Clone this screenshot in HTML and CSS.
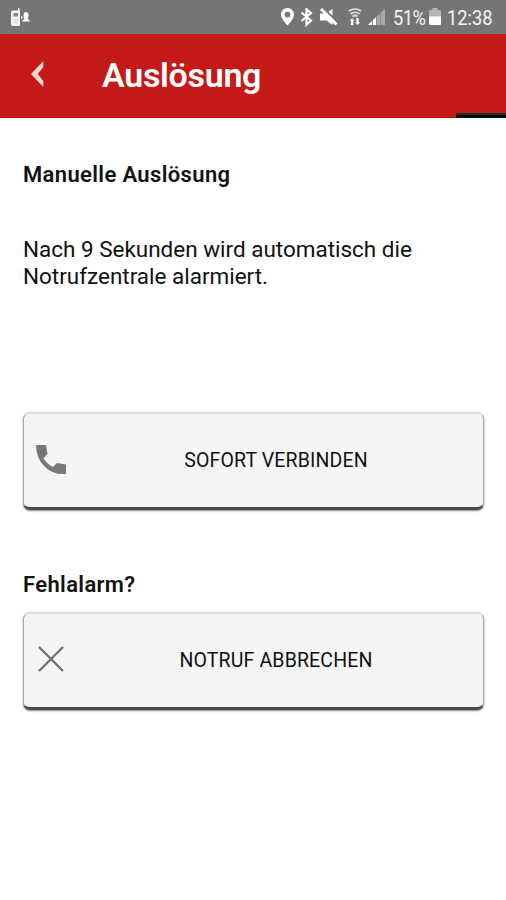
FILE: index.html
```html
<!DOCTYPE html>
<html lang="de">
<head>
<meta charset="utf-8">
<title>Auslösung</title>
<link rel="stylesheet" href="styles.css">
</head>
<body>
<div class="status">
  <svg class="device" width="22" height="20" viewBox="0 0 22 20">
    <path fill="#f1f1f1" d="M8 0h1.500v4H8zM3 2.500h7v14.500q0 1-1 1H3q-2 0-2-2V4.500q0-2 2-2z"/>
    <path fill="#888" d="M3.500 5h4.500v3.500H3.500z"/>
    <path stroke="#ccc" d="M3.500 12h4.500M3.500 14.500h4.500"/>
    <path fill="#fff" d="M11 8.500h1.500v2H11zM13.500 7.500q0-3.500 2.500-3.500t2.500 3.500q0 2-1 3.500 2.500.5 2.500 2.500h-8q.500-2 2.500-2.500-1-1.500-1-3.500z"/>
  </svg>
  <svg class="indicators" width="106" height="20" viewBox="0 0 106 20">
    <path fill="#fff" fill-rule="evenodd" d="M7.500 0C3.700 0 1 2.800 1 6.800c0 4.500 6.500 10.700 6.500 10.700S14 11.300 14 6.800C14 2.800 11.300 0 7.500 0zm0 3.700a2.900 2.900 0 1 1 0 5.800 2.900 2.900 0 0 1 0-5.800z"/>
    <path fill="none" stroke="#fff" stroke-width="2.200" d="M21.500 4.500l9.500 8-4.500 4.200V1.300L31 5l-9.500 8"/>
    <path fill="#fff" d="M40 5.500h5.500l7-4.500v16l-6-4.500H40z"/>
    <path stroke="#757575" stroke-width="2" d="M43.500 0l15 15"/>
    <path stroke="#fff" stroke-width="3" d="M41 1l15.500 15.500"/>
    <path fill="none" stroke="#e0e0e0" stroke-width="1.700" d="M69 3q6-4 12 0M70.500 6q4.500-3.500 9 0M72.500 8.500q2.500-2 5 0"/>
    <path fill="#fff" d="M69.500 13l2.700-3 2.300 3h-1.200v4h-2.300v-4zM75 14h1.300v-4h2.300v4h1.400l-2.400 3z"/>
    <path fill="#a9a9a9" d="M105 .5V17H88z"/>
    <path fill="#fff" d="M96 9.300V17h-8z"/>
    <path stroke="#858585" d="M92.500 12v5M96.500 8v9M100.500 4v13"/>
  </svg>
  <span class="percent">51%</span>
  <svg class="battery" width="12" height="17" viewBox="0 0 12 17">
    <path fill="#b5b5b5" d="M3.500 0h5v2H11q1 0 1 1v6H0V3q0-1 1-1h2.500z"/>
    <path fill="#fff" d="M0 8.500h12V16q0 1-1 1H1q-1 0-1-1z"/>
  </svg>
  <span class="clock">12:38</span>
</div>
<header class="appbar">
  <svg class="back" width="16" height="30" viewBox="0 0 16 30">
    <path fill="#f7d4d2" d="M13.300 1v6L7.800 14l5.500 7v6L1 14z"/>
  </svg>
  <h1>Auslösung</h1>
  <div class="progress"></div>
</header>
<main>
  <h2 class="manual">Manuelle Auslösung</h2>
  <p>Nach 9 Sekunden wird automatisch die<br>Notrufzentrale alarmiert.</p>
  <button class="connect">
    <svg width="30" height="30" viewBox="0 0 30 30"><path fill="#777" d="M0 0h10l1.500 9-4 4.200Q11 19 17 22l4-4 9 1.500V29Q17 30 8.500 21.500T0 0z"/></svg>
    <span>SOFORT VERBINDEN</span>
  </button>
  <h2 class="false-alarm">Fehlalarm?</h2>
  <button class="cancel">
    <svg width="30" height="30" viewBox="0 0 30 30"><path fill="none" stroke="#6c6c6c" stroke-width="2.200" d="M3 2l24 24M27 2L3 26"/></svg>
    <span>NOTRUF ABBRECHEN</span>
  </button>
</main>
</body>
</html>
```
FILE: styles.css
```css
* { box-sizing: border-box; }
body {
  margin: 0;
  width: 506px;
  height: 900px;
  overflow: hidden;
  background: #fff;
  color: #111;
  font-family: Roboto, sans-serif;
}
h1, h2, p { margin: 0; }
svg { flex: none; display: block; }
.status {
  display: flex;
  align-items: flex-start;
  height: 34px;
  padding: 8px 12px 0 10px;
  background: #757575;
  color: #f4f4f4;
  font-size: 21px;
  line-height: 20px;
  white-space: nowrap;
}
.indicators { margin-left: 248px; }
.percent, .clock { transform: scaleX(0.87); transform-origin: left; }
.percent { width: 35px; margin-left: 7px; letter-spacing: -0.6px; }
.battery { margin-left: 1px; }
.clock { margin-left: 6px; }
.appbar {
  position: relative;
  display: flex;
  align-items: center;
  height: 84px;
  padding: 0 0 2px 30px;
  background: #c41b18;
  border-bottom: 1px solid #c00808;
  color: #fff;
}
h1 {
  margin-left: 56px;
  font-size: 34px;
  font-weight: 600;
  line-height: 40px;
  letter-spacing: -0.3px;
}
.progress {
  position: absolute;
  right: 0;
  bottom: -1px;
  width: 50px;
  height: 5px;
  background: linear-gradient(#203030 2px, #080c0c 2px);
}
main { padding: 42px 22px 0 23px; }
h2 {
  font-size: 22px;
  font-weight: 600;
  line-height: 30px;
  letter-spacing: 0.36px;
}
p {
  margin-top: 46px;
  font-size: 22.480px;
  line-height: 27px;
}
button {
  display: flex;
  align-items: center;
  width: 461px;
  height: 98px;
  padding: 0 0 1px 12px;
  border: 1px solid #aaa;
  border-top: 2px solid #dedede;
  border-bottom: 3px solid #484848;
  border-radius: 7px;
  background: #f5f5f5;
  box-shadow: 0 1px 2px #888;
  color: #111;
  font: 450 19.500px/24px Roboto, sans-serif;
}
button span { flex: 1; padding: 2px 0 0 3px; letter-spacing: 0.15px; }
.connect { margin-top: 122px; }
.false-alarm { margin: 60px 0 12px; }
```
